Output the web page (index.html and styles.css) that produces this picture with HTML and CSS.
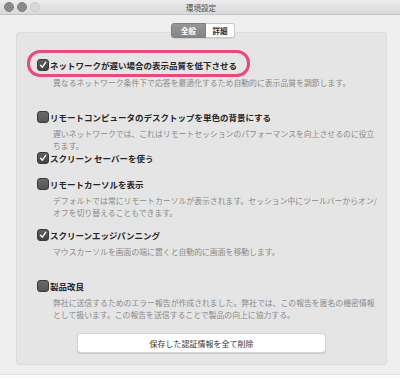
FILE: index.html
```html
<!DOCTYPE html>
<html lang="ja">
<head>
<meta charset="utf-8">
<title>環境設定</title>
<link rel="stylesheet" href="styles.css">
</head>
<body>
<div class="window">
  <div class="titlebar">
    <div class="lights">
      <span class="light dark"></span>
      <span class="light dark"></span>
      <span class="light pale"></span>
    </div>
    <div class="title">環境設定</div>
  </div>
  <div class="content">
    <div class="tabs">
      <span class="tab active">全般</span>
      <span class="tab">詳細</span>
    </div>
    <div class="panel">
      <div class="item i1">
        <div class="highlight">
          <div class="label"><span class="cb checked"><svg viewBox="0 0 12 12"><path d="M3 6.3 L5.2 8.6 L9.2 2.8" /></svg></span>ネットワークが遅い場合の表示品質を低下させる</div>
        </div>
        <div class="desc d1">異なるネットワーク条件下で応答を最適化するため自動的に表示品質を調節します。</div>
      </div>
      <div class="item i2">
        <div class="label"><span class="cb"></span>リモートコンピュータのデスクトップを単色の背景にする</div>
        <div class="desc">遅いネットワークでは、これはリモートセッションのパフォーマンスを向上させるのに役立<br>ちます。</div>
      </div>
      <div class="item i3">
        <div class="label"><span class="cb checked"><svg viewBox="0 0 12 12"><path d="M3 6.3 L5.2 8.6 L9.2 2.8" /></svg></span>スクリーン セーバーを使う</div>
      </div>
      <div class="item i4">
        <div class="label"><span class="cb"></span>リモートカーソルを表示</div>
        <div class="desc">デフォルトでは常にリモートカーソルが表示されます。セッション中にツールバーからオン/<br>オフを切り替えることもできます。</div>
      </div>
      <div class="item i5">
        <div class="label"><span class="cb checked"><svg viewBox="0 0 12 12"><path d="M3 6.3 L5.2 8.6 L9.2 2.8" /></svg></span>スクリーンエッジパンニング</div>
        <div class="desc">マウスカーソルを画面の端に置くと自動的に画面を移動します。</div>
      </div>
      <div class="item i6">
        <div class="label"><span class="cb"></span>製品改良</div>
        <div class="desc">弊社に送信するためのエラー報告が作成されました。弊社では、この報告を匿名の機密情報<br>として扱います。この報告を送信することで製品の向上に協力する。</div>
      </div>
      <div class="btnrow">
        <button class="btn" type="button">保存した認証情報を全て削除</button>
      </div>
    </div>
  </div>
</div>
</body>
</html>
```

FILE: styles.css
```css
* { box-sizing: border-box; }
html, body { margin: 0; padding: 0; }
body {
  background: #fafafa;
  font-family: "Noto Sans CJK JP", "Noto Sans", sans-serif;
  width: 400px;
  height: 378px;
  overflow: hidden;
}
.window {
  width: 400px;
  height: 375px;
  background: #efefef;
  border-bottom: 1px solid #e2e2e2;
}
.titlebar {
  height: 15px;
  background: linear-gradient(#ececec, #d9d9d9);
  border-bottom: 1px solid #c4c4c4;
  display: flex;
  align-items: center;
  position: relative;
}
.lights {
  display: flex;
  gap: 3px;
  padding-left: 4px;
}
.light {
  width: 10px;
  height: 10px;
  border-radius: 50%;
}
.light.dark { background: #8b8b8b; border: 1px solid #7d7d7d; }
.light.pale { background: #d8d8d8; border: 1px solid #cdcdcd; }
.title {
  flex: 1;
  text-align: center;
  font-size: 7.6px;
  color: #4a4a4a;
  margin-right: 38px;
  line-height: 15px;
}
.content {
  padding: 8px 13px 0 16px;
}
.tabs {
  display: flex;
  justify-content: center;
  position: relative;
  z-index: 1;
  height: 15px;
  margin-left: 3px;
}
.tab {
  display: flex;
  align-items: center;
  justify-content: center;
  height: 15px;
  font-size: 7.5px;
  font-weight: bold;
  color: #333;
  background: #fff;
  border: 1px solid #c9c9c9;
  border-left: none;
  width: 29px;
  border-radius: 0 3px 3px 0;
  box-shadow: 0 1px 1px rgba(0,0,0,0.08);
}
.tab.active {
  width: 35px;
  background: linear-gradient(#979797, #858585);
  color: #fff;
  border: 1px solid #7f7f7f;
  border-radius: 3px 0 0 3px;
}
.panel {
  margin-top: -6px;
  background: #e5e5e5;
  border: 1px solid #dcdcdc;
  border-radius: 3px;
  height: 333px;
  padding: 0 9px 0 20px;
}
.label {
  display: flex;
  align-items: center;
  height: 12px;
  font-size: 8.5px;
  font-weight: bold;
  color: #262626;
  white-space: nowrap;
}
.cb {
  width: 12px;
  height: 12px;
  flex: none;
  border-radius: 3px;
  background: linear-gradient(#5e5e5e, #444);
  border: 1px solid #3a3a3a;
  margin-right: 1px;
  display: flex;
  align-items: center;
  justify-content: center;
}
.cb:not(.checked) {
  background: linear-gradient(#6a6a6a, #555);
}
.cb svg { width: 10px; height: 10px; }
.cb path {
  fill: none;
  stroke: #fff;
  stroke-width: 1.7;
  stroke-linecap: round;
  stroke-linejoin: round;
}
.desc {
  margin-left: 16px;
  margin-top: 5px;
  font-size: 7.85px;
  line-height: 12px;
  color: #8a8a8a;
  white-space: nowrap;
}
.highlight {
  display: inline-block;
  margin-top: 17px;
  margin-left: -10px;
  border: 3px solid #e94a7e;
  border-radius: 13px;
  padding: 6px 10px 3px 7px;
}
.i1 .desc { margin-top: 0; }
.i2 { margin-top: 22px; }
.i3 { margin-top: 0; }
.i4 { margin-top: 14px; }
.i5 { margin-top: 10px; }
.i6 { margin-top: 22px; }
.btnrow {
  margin-top: 12px;
  display: flex;
  padding-left: 40px;
}
.btn {
  width: 249px;
  height: 20px;
  background: #fff;
  border: 1px solid #d4d4d4;
  border-radius: 4px;
  box-shadow: 0 1px 1px rgba(0,0,0,0.12);
  font-family: inherit;
  font-size: 8px;
  color: #333;
  padding: 0;
}
```
